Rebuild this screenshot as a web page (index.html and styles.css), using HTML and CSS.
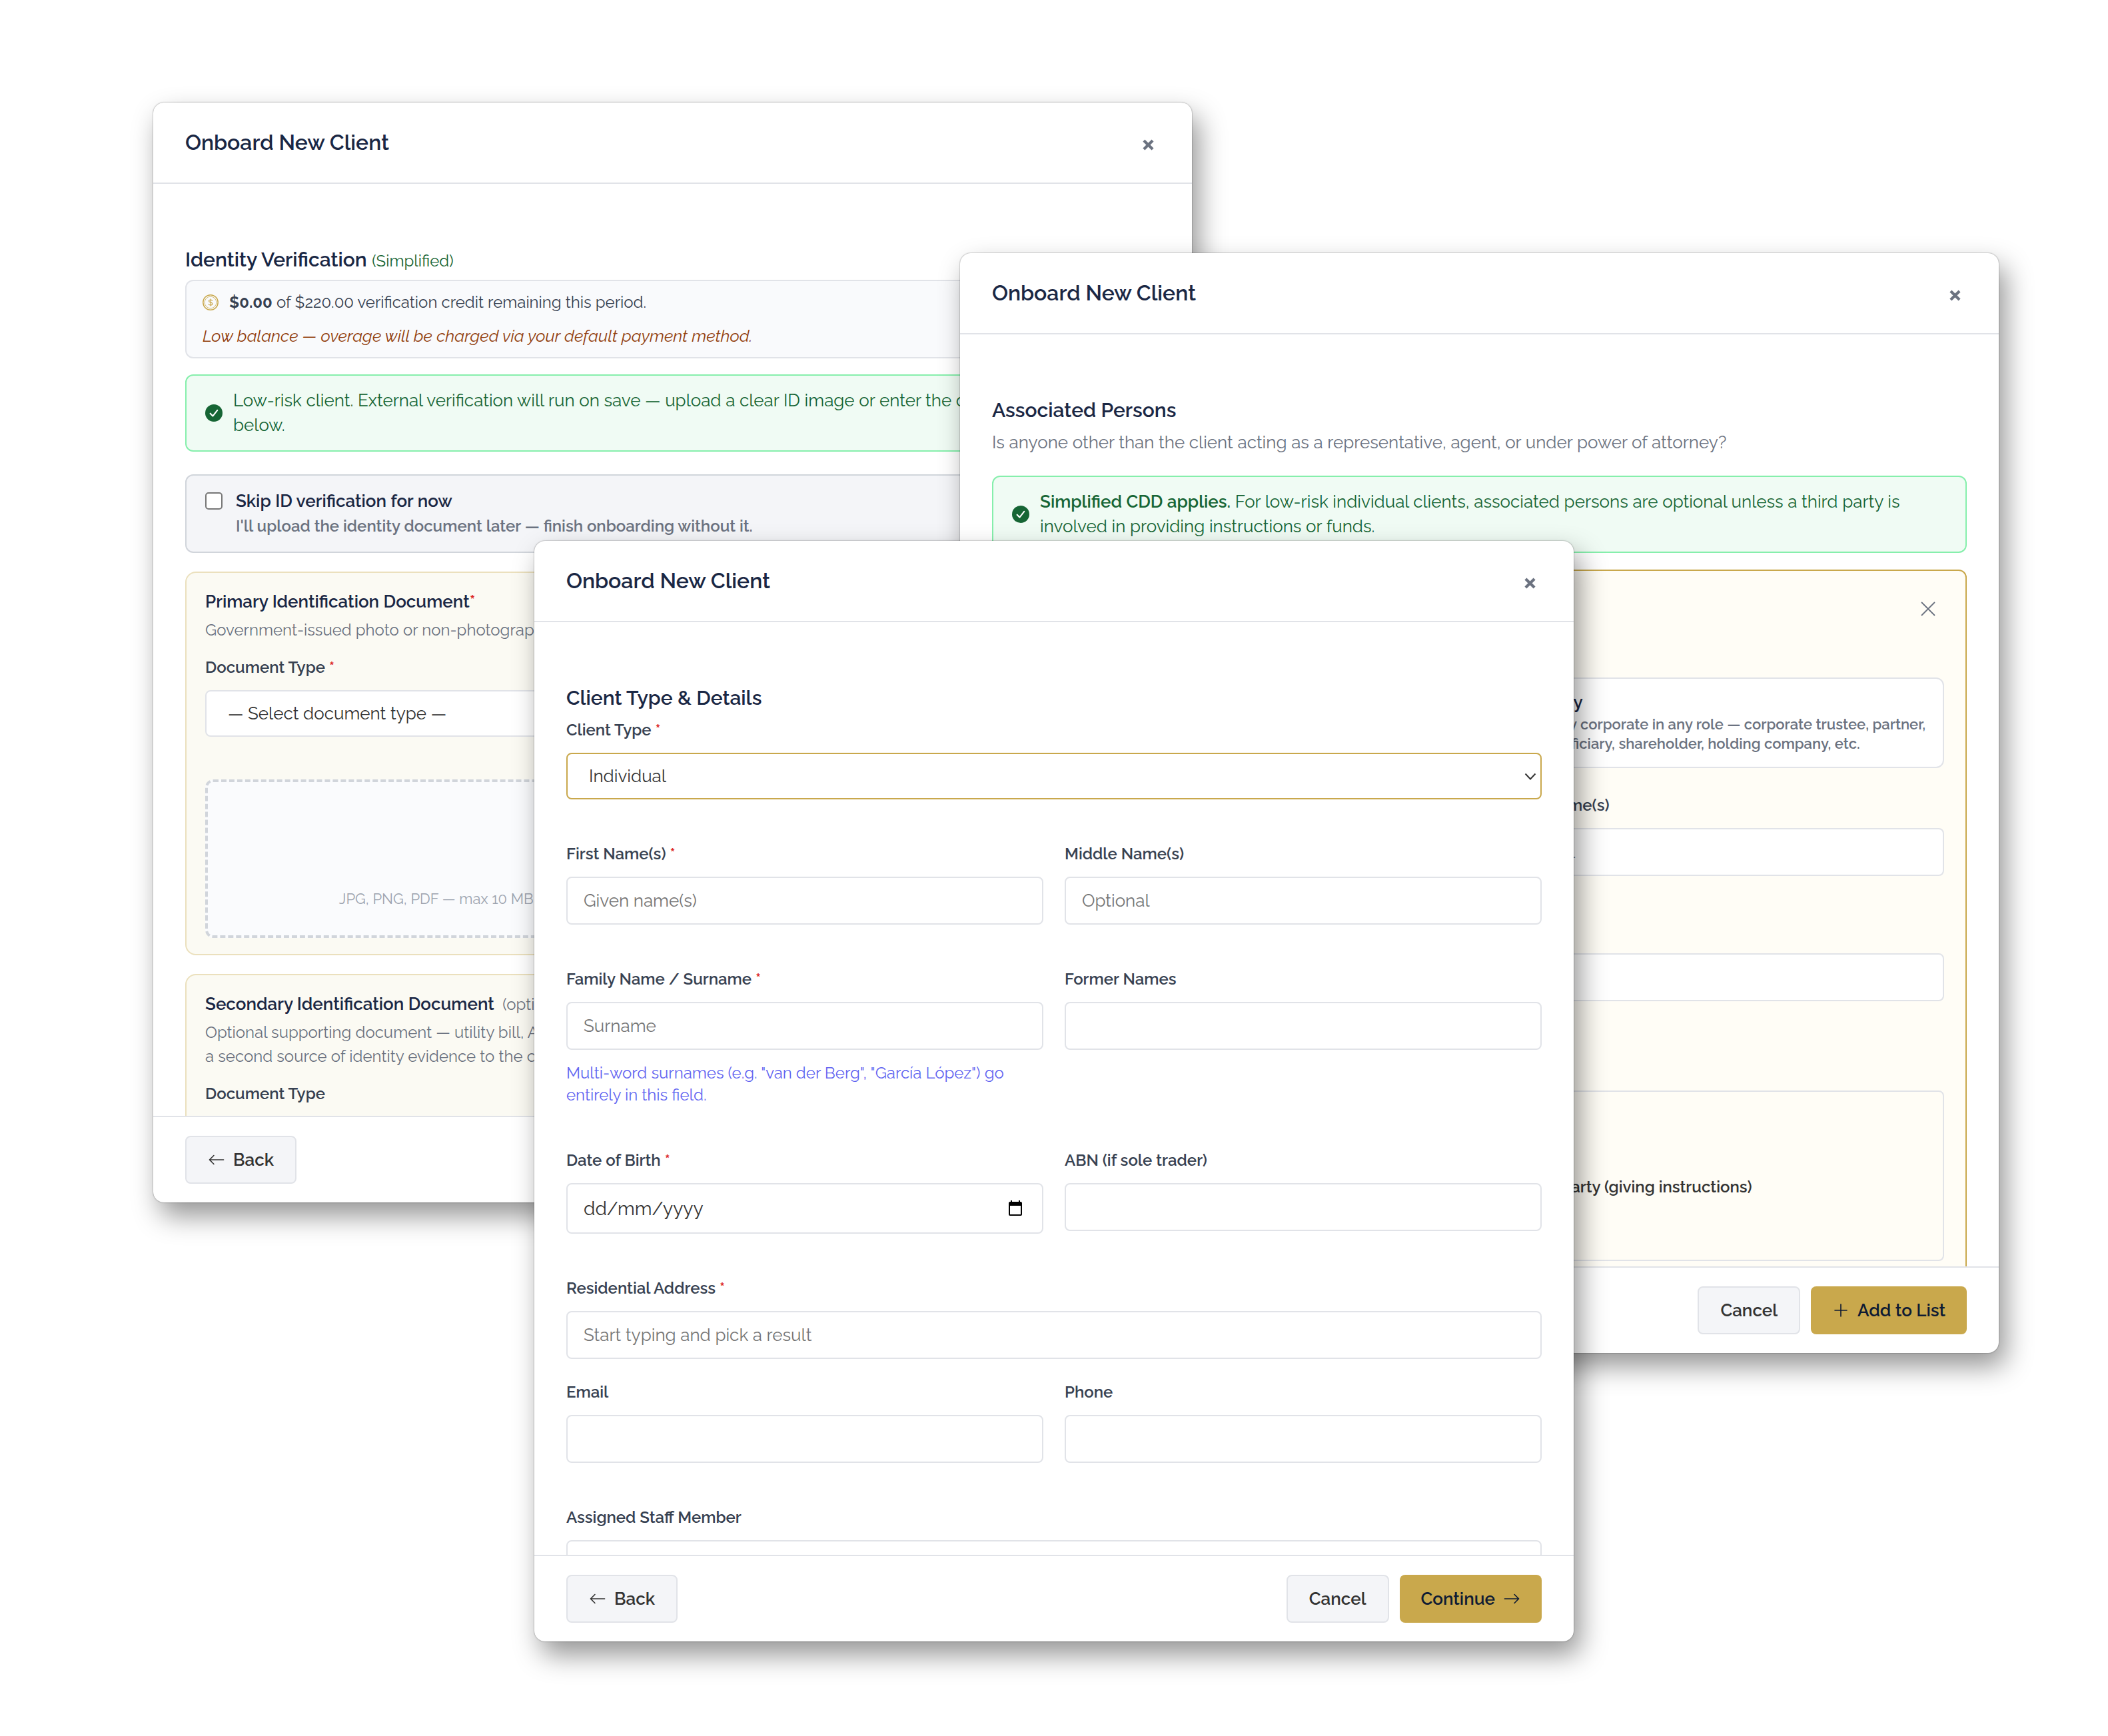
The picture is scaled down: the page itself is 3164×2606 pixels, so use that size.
FILE: index.html
```html
<!DOCTYPE html>
<html lang="en-AU">
<head>
<meta charset="utf-8">
<title>Onboard New Client</title>
<link rel="stylesheet" href="styles.css">
</head>
<body>
<svg class="sprite" aria-hidden="true">
  <symbol id="i-close" viewBox="0 0 16 16"><path d="M1.8 1.8l12.4 12.4M14.2 1.8L1.8 14.2" fill="none" stroke="currentColor" stroke-width="4"/></symbol>
  <symbol id="i-x" viewBox="0 0 22 22"><path d="M1.5 1.5l19 19M20.500 1.500l-19 19" fill="none" stroke="currentColor" stroke-width="1.800" stroke-linecap="round"/></symbol>
  <symbol id="i-left" viewBox="0 0 16 16"><path fill="currentColor" fill-rule="evenodd" d="M15 8a.5.5 0 0 0-.5-.5H2.707l3.147-3.146a.5.5 0 1 0-.708-.708l-4 4a.5.5 0 0 0 0 .708l4 4a.5.5 0 0 0 .708-.708L2.707 8.500H14.500A.5.5 0 0 0 15 8"/></symbol>
  <symbol id="i-right" viewBox="0 0 16 16"><path fill="currentColor" fill-rule="evenodd" d="M1 8a.5.5 0 0 1 .5-.5h11.793l-3.147-3.146a.5.5 0 0 1 .708-.708l4 4a.5.5 0 0 1 0 .708l-4 4a.5.5 0 0 1-.708-.708L13.293 8.500H1.500A.5.5 0 0 1 1 8"/></symbol>
  <symbol id="i-plus" viewBox="0 0 26 26"><path d="M13 4v18M4 13h18" fill="none" stroke="currentColor" stroke-width="1.600" stroke-linecap="round"/></symbol>
  <symbol id="i-down" viewBox="0 0 18 12"><path d="M1.500 1.500L9 9.500l7.500-8" fill="none" stroke="currentColor" stroke-width="2"/></symbol>
  <symbol id="i-check" viewBox="0 0 16 16"><circle cx="8" cy="8" r="8" fill="currentColor"/><path d="M4.700 8.400l2.300 2.400 4.200-5.300" fill="none" stroke="#fff" stroke-width="1.300" stroke-linecap="round" stroke-linejoin="round"/></symbol>
  <symbol id="i-coin" viewBox="0 0 24 24"><g fill="none" stroke="currentColor"><circle cx="12" cy="12" r="11.200" stroke-width="1.500"/><circle cx="12" cy="12" r="8.800" stroke-width=".8"/><path d="M14.600 9.800c-.2-1.100-1.200-1.800-2.600-1.800-1.500 0-2.500.8-2.500 1.900 0 2.700 5.300 1.300 5.300 4.100 0 1.200-1.100 2-2.800 2-1.600 0-2.600-.8-2.800-2M12 6.400v11.200" stroke-width="1.200"/></g></symbol>
  <symbol id="i-cal" viewBox="0 0 20 24"><path fill="#000" fill-rule="evenodd" d="M3 0h2v2h10V0h2v2h1a2 2 0 0 1 2 2v17a2 2 0 0 1-2 2H2a2 2 0 0 1-2-2V4a2 2 0 0 1 2-2h1zM2 8v13h16V8z"/></symbol>
</svg>

<main class="stage">

  <section class="dialog dialog-identity" aria-labelledby="t1">
    <header class="dialog-head">
      <h1 class="dialog-title" id="t1">Onboard New Client</h1>
      <button class="close" type="button" aria-label="Close"><svg class="ic-close"><use href="#i-close"/></svg></button>
    </header>
    <div class="dialog-body">
      <h2 class="section-title">Identity Verification <span class="tag">(Simplified)</span></h2>
      <div class="credit">
        <p class="credit-row"><svg class="ic-coin"><use href="#i-coin"/></svg><span><strong>$0.00</strong> of $220.00 verification credit remaining this period.</span></p>
        <p class="credit-warn">Low balance — overage will be charged via your default payment method.</p>
      </div>
      <div class="callout">
        <svg class="ic-check"><use href="#i-check"/></svg>
        <p>Low-risk client. External verification will run on save — upload a clear ID image or enter the details<br>below.</p>
      </div>
      <div class="skip">
        <input class="tick" type="checkbox" id="skip">
        <label for="skip"><span class="skip-title">Skip ID verification for now</span><span class="skip-note">I'll upload the identity document later — finish onboarding without it.</span></label>
      </div>
      <div class="doc">
        <h3 class="doc-title">Primary Identification Document<span class="req">*</span></h3>
        <p class="doc-note">Government-issued photo or non-photographic ID.</p>
        <div class="field">
          <label class="label" for="doc1">Document Type <span class="req">*</span></label>
          <div class="select-wrap">
            <select class="control select" id="doc1"><option>— Select document type —</option></select>
            <svg class="ic-down"><use href="#i-down"/></svg>
          </div>
        </div>
        <div class="uploads"><div class="drop">JPG, PNG, PDF — max 10 MB</div></div>
      </div>
      <div class="doc">
        <h3 class="doc-title">Secondary Identification Document <span class="opt">(optional)</span></h3>
        <p class="doc-note">Optional supporting document — utility bill, ATO notice or bank statement. Adds<br>a second source of identity evidence to the client file.</p>
        <div class="field">
          <label class="label" for="doc2">Document Type</label>
          <select class="control select" id="doc2"><option>— Select document type —</option></select>
        </div>
      </div>
    </div>
    <footer class="dialog-foot">
      <button class="btn" type="button"><svg class="ic-btn"><use href="#i-left"/></svg>Back</button>
    </footer>
  </section>

  <section class="dialog dialog-persons" aria-labelledby="t2">
    <header class="dialog-head">
      <h1 class="dialog-title" id="t2">Onboard New Client</h1>
      <button class="close" type="button" aria-label="Close"><svg class="ic-close"><use href="#i-close"/></svg></button>
    </header>
    <div class="dialog-body">
      <h2 class="section-title">Associated Persons</h2>
      <p class="lead">Is anyone other than the client acting as a representative, agent, or under power of attorney?</p>
      <div class="callout">
        <svg class="ic-check"><use href="#i-check"/></svg>
        <p><strong>Simplified CDD applies.</strong> For low-risk individual clients, associated persons are optional unless a third party is<br>involved in providing instructions or funds.</p>
      </div>
      <div class="person">
        <div class="person-head">
          <h3 class="doc-title">Add Person</h3>
          <button class="close" type="button" aria-label="Remove person"><svg class="ic-x"><use href="#i-x"/></svg></button>
        </div>
        <p class="label">Person Type</p>
        <div class="row kinds">
          <div class="kind"><input class="tick" type="radio" name="kind" id="k1" checked><label for="k1"><span class="kind-title">Individual</span></label></div>
          <div class="kind"><input class="tick" type="radio" name="kind" id="k2"><label for="k2"><span class="kind-title">Entity</span><span class="kind-note">In any corporate in any role — corporate trustee, partner,<br>beneficiary, shareholder, holding company, etc.</span></label></div>
        </div>
        <div class="row">
          <div class="field"><label class="label" for="pf">First Name(s)</label><input class="control" id="pf" type="text"></div>
          <div class="field"><label class="label" for="pm">Middle Name(s)</label><input class="control" id="pm" type="text" placeholder="Optional"></div>
        </div>
        <div class="field"><label class="label" for="ps">Surname</label><input class="control" id="ps" type="text"></div>
        <p class="label roles-label">Roles</p>
        <div class="roles">
          <label class="role" for="r1"><input class="tick" type="checkbox" id="r1">Agent</label>
          <label class="role" for="r2"><input class="tick" type="checkbox" id="r2">Third Party (giving instructions)</label>
        </div>
      </div>
    </div>
    <footer class="dialog-foot">
      <button class="btn push" type="button">Cancel</button>
      <button class="btn btn-gold" type="button"><svg class="ic-btn"><use href="#i-plus"/></svg>Add to List</button>
    </footer>
  </section>

  <section class="dialog dialog-client" aria-labelledby="t3">
    <header class="dialog-head">
      <h1 class="dialog-title" id="t3">Onboard New Client</h1>
      <button class="close" type="button" aria-label="Close"><svg class="ic-close"><use href="#i-close"/></svg></button>
    </header>
    <div class="dialog-body">
      <h2 class="section-title">Client Type &amp; Details</h2>
      <div class="field">
        <label class="label" for="ctype">Client Type <span class="req">*</span></label>
        <div class="select-wrap">
          <select class="control select is-active" id="ctype"><option>Individual</option></select>
          <svg class="ic-down"><use href="#i-down"/></svg>
        </div>
      </div>
      <div class="row">
        <div class="field"><label class="label" for="first">First Name(s) <span class="req">*</span></label><input class="control" id="first" type="text" placeholder="Given name(s)"></div>
        <div class="field"><label class="label" for="middle">Middle Name(s)</label><input class="control" id="middle" type="text" placeholder="Optional"></div>
      </div>
      <div class="row">
        <div class="field">
          <label class="label" for="family">Family Name / Surname <span class="req">*</span></label><input class="control" id="family" type="text" placeholder="Surname">
          <p class="hint">Multi-word surnames (e.g. "van der Berg", "García López") go entirely in this field.</p>
        </div>
        <div class="field"><label class="label" for="former">Former Names</label><input class="control" id="former" type="text"></div>
      </div>
      <div class="row">
        <div class="field">
          <label class="label" for="dob">Date of Birth <span class="req">*</span></label>
          <div class="select-wrap">
            <input class="control date" id="dob" type="text" placeholder="dd/mm/yyyy">
            <svg class="ic-cal"><use href="#i-cal"/></svg>
          </div>
        </div>
        <div class="field"><label class="label" for="abn">ABN (if sole trader)</label><input class="control" id="abn" type="text"></div>
      </div>
      <div class="field tight"><label class="label" for="addr">Residential Address <span class="req">*</span></label><input class="control" id="addr" type="text" placeholder="Start typing and pick a result"></div>
      <div class="row">
        <div class="field"><label class="label" for="email">Email</label><input class="control" id="email" type="email"></div>
        <div class="field"><label class="label" for="phone">Phone</label><input class="control" id="phone" type="tel"></div>
      </div>
      <div class="field"><label class="label" for="staff">Assigned Staff Member</label><input class="control" id="staff" type="text"></div>
    </div>
    <footer class="dialog-foot">
      <button class="btn" type="button"><svg class="ic-btn"><use href="#i-left"/></svg>Back</button>
      <button class="btn push" type="button">Cancel</button>
      <button class="btn btn-gold" type="button">Continue<svg class="ic-btn"><use href="#i-right"/></svg></button>
    </footer>
  </section>

</main>
</body>
</html>
```
FILE: styles.css
```css
:root {
  --navy: #1a2744;
  --slate: #374151;
  --muted: #6b7280;
  --ink: #333;
  --line: #e1e3e8;
  --gold: #c9a84c;
  --green: #166534;
}
* { box-sizing: border-box; margin: 0; }
body {
  background: #fff;
  color: var(--ink);
  font-family: Raleway, Lato, sans-serif;
  font-size: 26px;
}
button, input, select { font: inherit; color: inherit; }
.sprite { display: none; }

/* Three overlapping windows share one proportional grid */
.stage {
  display: grid;
  height: 100vh;
  grid-template-columns:
    minmax(0, 230fr) minmax(0, 572fr) minmax(0, 639fr) minmax(0, 348fr)
    minmax(0, 573fr) minmax(0, 638fr) minmax(0, 164fr);
  grid-template-rows:
    minmax(0, 154fr) minmax(0, 226fr) minmax(0, 432fr) minmax(0, 993fr)
    minmax(0, 226fr) minmax(0, 433fr) minmax(0, 142fr);
}
.dialog {
  display: flex;
  flex-direction: column;
  isolation: isolate;
  overflow: hidden;
  background: #fff;
  border-radius: 16px;
  box-shadow: 0 0 2px rgba(0, 0, 0, .5), 10px 20px 40px rgba(0, 0, 0, .42);
}
.dialog-identity { grid-area: 2 / 2 / 5 / 5; }
.dialog-persons { grid-area: 3 / 4 / 6 / 7; }
.dialog-client { grid-area: 4 / 3 / 7 / 6; }

.dialog-head {
  display: flex;
  flex: none;
  align-items: center;
  justify-content: space-between;
  height: 122px;
  padding: 0 48px;
  border-bottom: 2px solid var(--line);
}
.dialog-title { padding-bottom: 2px; font-size: 32px; font-weight: 600; color: var(--navy); }
.close {
  display: flex;
  align-items: center;
  justify-content: center;
  width: 36px;
  height: 36px;
  padding: 0;
  border: 0;
  background: none;
  color: var(--muted);
}
.dialog-head .close { padding-top: 6px; }
.ic-close { width: 17px; height: 17px; }
.ic-x { width: 22px; height: 22px; }

.dialog-body { flex: 1; min-height: 0; overflow: hidden; padding: 92px 48px 0; }
.section-title {
  margin-bottom: 8px;
  font-size: 30px;
  line-height: 44px;
  font-weight: 600;
  color: var(--navy);
}
.tag { font-size: 24px; line-height: 24px; font-weight: 400; color: var(--green); }
.lead { margin-bottom: 32px; line-height: 36px; color: var(--muted); }

.dialog-foot {
  display: flex;
  flex: none;
  gap: 16px;
  padding: 28px 48px;
  border-top: 2px solid var(--line);
}
.push { margin-left: auto; }
.btn {
  display: flex;
  align-items: center;
  gap: 12px;
  height: 72px;
  padding: 0 32px;
  border: 2px solid var(--line);
  border-radius: 8px;
  background: #f4f5f8;
  font-weight: 600;
}
.btn-gold { border: 0; background: var(--gold); color: #0f1b33; }
.ic-btn { width: 26px; height: 26px; }

.field { margin-bottom: 64px; }
.tight { margin-bottom: 32px; }
.row { display: grid; grid-template-columns: 1fr 1fr; column-gap: 32px; }
.label {
  display: block;
  margin-bottom: 16px;
  font-size: 24px;
  line-height: 36px;
  font-weight: 600;
  color: var(--slate);
}
.req { color: #dc2626; }
.control {
  display: block;
  width: 100%;
  height: 72px;
  padding: 0 24px;
  border: 2px solid var(--line);
  border-radius: 8px;
  background: #fff;
}
.control::placeholder { color: #757575; opacity: 1; }
.select { height: 70px; padding: 0 32px; appearance: none; }
.is-active { border-color: var(--gold); }
.date { height: 76px; font-size: 28px; }
.date::placeholder { color: var(--ink); }
.select-wrap { position: relative; }
.ic-down { position: absolute; right: 8px; top: 30px; width: 18px; height: 12px; }
.ic-cal { position: absolute; right: 32px; top: 26px; width: 20px; height: 24px; }
.hint { margin-top: 18px; font-size: 24px; line-height: 33px; color: #6366f1; }

.credit {
  margin-bottom: 24px;
  padding: 13px 24px;
  border: 2px solid var(--line);
  border-radius: 12px;
  background: #f9fafc;
  font-size: 24px;
  line-height: 38px;
  color: var(--slate);
}
.credit-row { display: flex; align-items: center; gap: 16px; margin-bottom: 12px; }
.ic-coin { flex: none; width: 24px; height: 24px; color: var(--gold); }
.credit-warn { font-size: 25px; font-style: italic; color: #92400e; }

.callout {
  display: flex;
  align-items: center;
  gap: 16px;
  margin-bottom: 34px;
  padding: 19px 28px;
  border: 2px solid #86efac;
  border-radius: 12px;
  background: #f0fbf4;
  line-height: 37px;
  color: var(--green);
  white-space: nowrap;
}
.callout strong { font-weight: 600; }
.dialog-persons .callout { margin-bottom: 25px; }
.ic-check { flex: none; width: 26px; height: 26px; }

.skip {
  display: flex;
  gap: 20px;
  margin-bottom: 28px;
  padding: 19px 28px;
  border: 2px solid #d1d5db;
  border-radius: 12px;
  background: #f4f5f8;
  font-weight: 600;
  line-height: 38px;
}
.tick {
  flex: none;
  width: 26px;
  height: 26px;
  margin: 6px 0 0;
  border: 2px solid #767676;
  border-radius: 5px;
  background: #fff;
  appearance: none;
}
.tick[type="radio"] { border-radius: 50%; }
.skip-title { display: block; color: var(--navy); }
.skip-note { display: block; font-size: 24px; color: var(--muted); }

.doc {
  margin-bottom: 28px;
  padding: 24px 28px;
  border: 2px solid #ebe0bd;
  border-radius: 16px;
  background: #fbfaf3;
}
.doc-title { font-size: 26px; line-height: 38px; font-weight: 600; color: var(--navy); }
.opt { margin-left: 6px; font-size: 24px; line-height: 24px; font-weight: 400; color: var(--muted); }
.doc-note {
  margin: 6px 0 20px;
  font-size: 24px;
  line-height: 36px;
  color: var(--muted);
  white-space: nowrap;
}
.uploads { display: grid; grid-template-columns: 1fr 1fr; gap: 16px; }
.drop {
  height: 238px;
  padding-top: 158px;
  border: 4px dashed #d1d5db;
  border-radius: 12px;
  background: #fafbfd;
  font-size: 22px;
  line-height: 34px;
  text-align: center;
  color: #9ca3af;
}

.person {
  padding: 32px;
  border: 2px solid var(--gold);
  border-radius: 12px;
  background: #fffdf6;
}
.person-head {
  display: flex;
  align-items: center;
  justify-content: space-between;
  height: 50px;
  padding-right: 6px;
  margin-bottom: 26px;
}
.kinds { margin-bottom: 38px; }
.kind {
  display: flex;
  gap: 28px;
  height: 136px;
  padding: 16px 26px;
  border: 2px solid var(--line);
  border-radius: 12px;
  background: #fff;
  white-space: nowrap;
}
.kind-title { display: block; font-weight: 600; line-height: 38px; color: var(--navy); }
.kind-note { display: block; font-size: 22px; font-weight: 600; line-height: 29px; color: var(--muted); }
.roles-label { margin-bottom: 34px; }
.roles {
  display: grid;
  grid-template-columns: 1fr 1fr;
  column-gap: 32px;
  height: 256px;
  padding: 124px 24px 0;
  border: 2px solid var(--line);
  border-radius: 8px;
}
.role { display: flex; gap: 16px; font-size: 24px; font-weight: 600; line-height: 38px; }
```
